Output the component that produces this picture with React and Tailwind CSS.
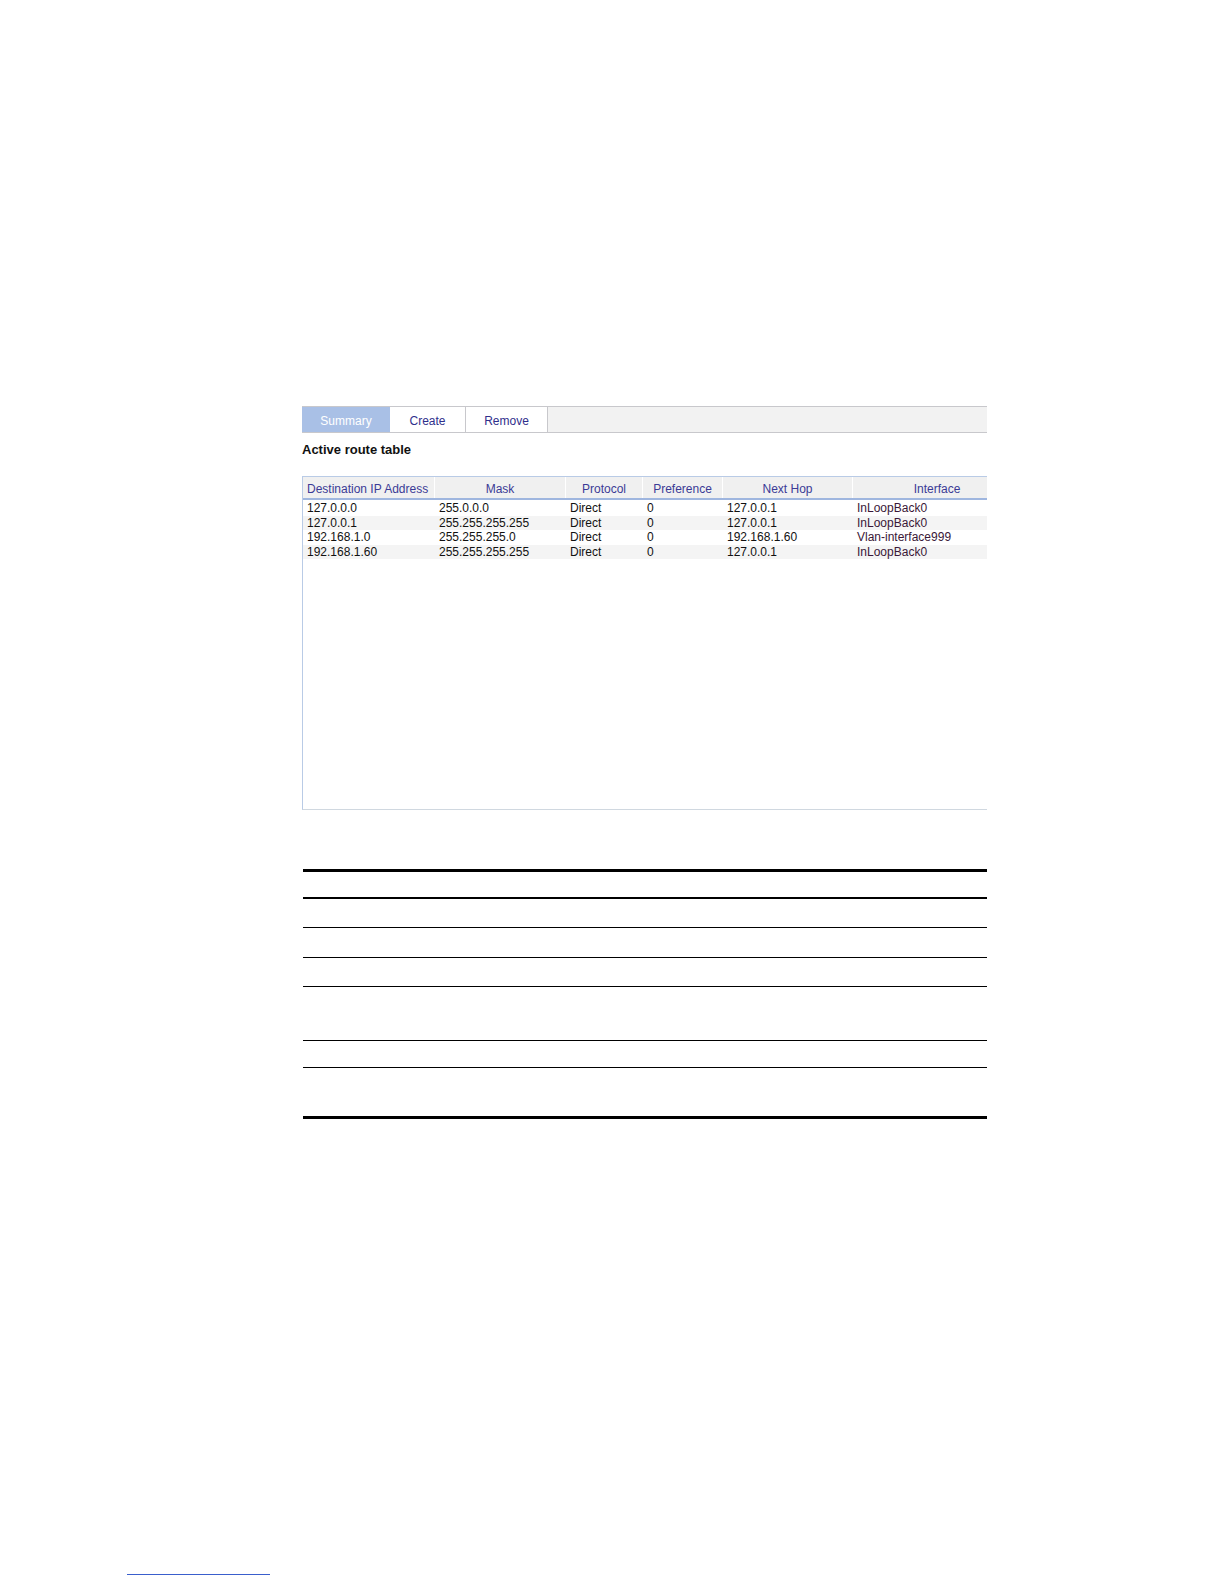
const rows = [
  ['127.0.0.0', '255.0.0.0', 'Direct', '0', '127.0.0.1', 'InLoopBack0'],
  ['127.0.0.1', '255.255.255.255', 'Direct', '0', '127.0.0.1', 'InLoopBack0'],
  ['192.168.1.0', '255.255.255.0', 'Direct', '0', '192.168.1.60', 'Vlan-interface999'],
  ['192.168.1.60', '255.255.255.255', 'Direct', '0', '127.0.0.1', 'InLoopBack0'],
];

const cols = [
  { name: 'Destination IP Address', w: 'w-[132px]', align: 'text-left pl-[4px]' },
  { name: 'Mask', w: 'w-[131px]', align: 'text-center' },
  { name: 'Protocol', w: 'w-[77px]', align: 'text-center' },
  { name: 'Preference', w: 'w-[80px]', align: 'text-center' },
  { name: 'Next Hop', w: 'w-[130px]', align: 'text-center' },
  { name: 'Interface', w: 'flex-1', align: 'text-center pl-[34px]' },
];

const cellW = ['w-[132px]', 'w-[131px]', 'w-[77px]', 'w-[80px]', 'w-[130px]', 'flex-1'];

export default function App() {
  return (
    <div className="w-full min-h-screen bg-white relative overflow-hidden font-['Liberation_Sans',Arial,sans-serif]">
      <div className="pl-[302px] pt-[406px] w-[987px]">
        {/* tabs */}
        <div className="flex h-[27px] bg-[#f2f2f2] border-y border-[#c8c8cc] text-[12px] text-[#2f2f8c]">
          <div className="w-[88px] flex items-center justify-center pt-[3px] bg-[#a9c0e6] text-white">Summary</div>
          <div className="w-[76px] flex items-center justify-center pt-[3px] border-r border-[#c8c8cc] bg-white">Create</div>
          <div className="w-[82px] flex items-center justify-center pt-[3px] border-r border-[#c8c8cc] bg-white">Remove</div>
        </div>

        <div className="mt-[9px] text-[13px] font-bold text-[#111] leading-[16px]">Active route table</div>

        {/* route table */}
        <div className="mt-[18px] h-[334px] border-l border-t border-b border-[#b9cbe6] border-b-[#d0d8e0] text-[12px]">
          <div className="flex h-[23px] bg-[#f0f0f0] border-b-2 border-[#9fb6df] text-[#3b3b96]">
            {cols.map((c, i) => (
              <div key={c.name} className={`${c.w} ${c.align} flex items-center ${i === 0 ? '' : 'justify-center'} ${i < 5 ? 'border-r border-white' : ''} pt-[3px]`}>
                {c.name}
              </div>
            ))}
          </div>
          <div className="pt-[1px]">
            {rows.map((r, ri) => (
              <div key={ri} className={`flex h-[14.6px] items-center leading-[14px] ${ri % 2 === 1 ? 'bg-[#f4f4f4]' : 'bg-white'}`}>
                {r.map((v, ci) => (
                  <div key={ci} className={`${cellW[ci]} pl-[4px] whitespace-nowrap ${ci === 5 ? 'text-[#3a1838]' : 'text-[#111]'}`}>{v}</div>
                ))}
              </div>
            ))}
          </div>
        </div>

        {/* empty table lines */}
        <div className="mt-[59px] ml-[1px]">
          <div className="h-[3px] bg-black"></div>
          <div className="h-[25px]"></div>
          <div className="h-[2px] bg-black"></div>
          <div className="h-[28px]"></div>
          <div className="h-px bg-black"></div>
          <div className="h-[29px]"></div>
          <div className="h-px bg-black"></div>
          <div className="h-[28px]"></div>
          <div className="h-px bg-black"></div>
          <div className="h-[53px]"></div>
          <div className="h-px bg-black"></div>
          <div className="h-[26px]"></div>
          <div className="h-px bg-black"></div>
          <div className="h-[48px]"></div>
          <div className="h-[3px] bg-black"></div>
        </div>
      </div>

      <div className="absolute left-[127px] top-[1574px] w-[143px] h-px bg-[#3a5fcd]"></div>
    </div>
  );
}
